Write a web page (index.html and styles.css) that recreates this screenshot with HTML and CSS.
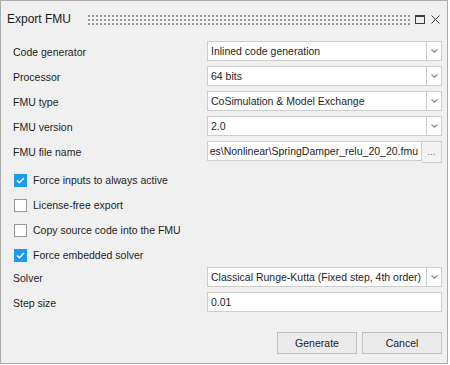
FILE: index.html
```html
<!doctype html>
<html lang="en">
    <head>
        <meta charset="UTF-8" />
        <meta name="viewport" content="width=device-width, initial-scale=1.0" />
        <title>Export FMU</title>
        <link rel="stylesheet" href="styles.css">
    </head>
    <body>
        <div class="window">
            <div class="titlebar">
                <span class="title">Export FMU</span>
                <div class="grip"></div>
                <svg class="tb-icon" width="10" height="9" viewBox="0 0 10 9">
                    <rect x="0.5" y="0.5" width="9" height="8" fill="none" stroke="#3c3c3c" />
                    <line x1="0" y1="1.5" x2="10" y2="1.5" stroke="#3c3c3c" />
                </svg>
                <svg class="tb-icon tb-close" width="9" height="9" viewBox="0 0 9 9">
                    <path d="M0.5 0.5 L8.5 8.5 M8.5 0.5 L0.5 8.5" stroke="#3c3c3c" fill="none" />
                </svg>
            </div>

            <div class="content">
                <div class="fields">
                    <div class="row">
                        <label>Code generator</label>
                        <div class="combo">
                            <span class="combo-value">Inlined code generation</span>
                            <span class="combo-btn"><svg width="7" height="4" viewBox="0 0 7 4"><path d="M0.5 0.5 L3.5 3.2 L6.5 0.5" fill="none" stroke="#8a8a8a" stroke-width="1.2" /></svg></span>
                        </div>
                    </div>
                    <div class="row">
                        <label>Processor</label>
                        <div class="combo">
                            <span class="combo-value">64 bits</span>
                            <span class="combo-btn"><svg width="7" height="4" viewBox="0 0 7 4"><path d="M0.5 0.5 L3.5 3.2 L6.5 0.5" fill="none" stroke="#8a8a8a" stroke-width="1.2" /></svg></span>
                        </div>
                    </div>
                    <div class="row">
                        <label>FMU type</label>
                        <div class="combo">
                            <span class="combo-value">CoSimulation &amp; Model Exchange</span>
                            <span class="combo-btn"><svg width="7" height="4" viewBox="0 0 7 4"><path d="M0.5 0.5 L3.5 3.2 L6.5 0.5" fill="none" stroke="#8a8a8a" stroke-width="1.2" /></svg></span>
                        </div>
                    </div>
                    <div class="row">
                        <label>FMU version</label>
                        <div class="combo">
                            <span class="combo-value">2.0</span>
                            <span class="combo-btn"><svg width="7" height="4" viewBox="0 0 7 4"><path d="M0.5 0.5 L3.5 3.2 L6.5 0.5" fill="none" stroke="#8a8a8a" stroke-width="1.2" /></svg></span>
                        </div>
                    </div>
                    <div class="row">
                        <label>FMU file name</label>
                        <div class="file">
                            <div class="file-path">
                                <span>es\Nonlinear\SpringDamper_relu_20_20.fmu</span>
                            </div>
                            <span class="browse">...</span>
                        </div>
                    </div>
                </div>

                <div class="checks">
                    <div class="check">
                        <span class="box checked"><svg width="9" height="7" viewBox="0 0 9 7"><path d="M1 3.6 L3.4 5.8 L8 1" fill="none" stroke="#fff" stroke-width="1.4" /></svg></span>
                        <span>Force inputs to always active</span>
                    </div>
                    <div class="check">
                        <span class="box"></span>
                        <span>License-free export</span>
                    </div>
                    <div class="check">
                        <span class="box"></span>
                        <span>Copy source code into the FMU</span>
                    </div>
                    <div class="check">
                        <span class="box checked"><svg width="9" height="7" viewBox="0 0 9 7"><path d="M1 3.6 L3.4 5.8 L8 1" fill="none" stroke="#fff" stroke-width="1.4" /></svg></span>
                        <span>Force embedded solver</span>
                    </div>
                </div>

                <div class="fields fields-solver">
                    <div class="row">
                        <label>Solver</label>
                        <div class="combo">
                            <span class="combo-value">Classical Runge-Kutta (Fixed step, 4th order)</span>
                            <span class="combo-btn"><svg width="7" height="4" viewBox="0 0 7 4"><path d="M0.5 0.5 L3.5 3.2 L6.5 0.5" fill="none" stroke="#8a8a8a" stroke-width="1.2" /></svg></span>
                        </div>
                    </div>
                    <div class="row">
                        <label>Step size</label>
                        <div class="textbox">0.01</div>
                    </div>
                </div>

                <div class="actions">
                    <button type="button">Generate</button>
                    <button type="button">Cancel</button>
                </div>
            </div>
        </div>
    </body>
</html>
```

FILE: styles.css
```css
body {
    margin: 0;
    background: #fff;
    font-family: "Liberation Sans", Arial, sans-serif;
    font-size: 10.5px;
    color: #1e1e1e;
}
.window {
    width: 448px;
    height: 364px;
    box-sizing: border-box;
    border: 1px solid #ababab;
    background: #f0f0f0;
}
.titlebar {
    display: flex;
    align-items: center;
    height: 36px;
    padding: 0 7px 0 6px;
}
.title {
    font-size: 12px;
    color: #1a1a1a;
}
.grip {
    flex: 1;
    height: 11px;
    margin: 0 5px 0 16px;
    background-image: radial-gradient(circle, #999 0.8px, transparent 1px);
    background-size: 4px 4px;
}
.tb-icon {
    display: block;
}
.tb-close {
    margin-left: 6px;
}
.content {
    padding: 4px 5px 0 12px;
}
.fields {
    display: flex;
    flex-direction: column;
    gap: 5px;
}
.fields-solver {
    margin-top: 2px;
}
.row {
    display: grid;
    grid-template-columns: 194px minmax(0, 1fr);
    height: 20px;
}
.row label {
    padding-top: 5px;
}
.combo {
    display: flex;
    min-width: 0;
}
.combo-value,
.textbox,
.file-path {
    flex: 1;
    min-width: 0;
    box-sizing: border-box;
    height: 20px;
    line-height: 18px;
    padding: 0 3px;
    border: 1px solid #cdcdcd;
    background: #fff;
    white-space: nowrap;
    overflow: hidden;
}
.combo-btn {
    width: 15px;
    box-sizing: border-box;
    border: 1px solid #cdcdcd;
    border-left: none;
    background: #fff;
    display: flex;
    align-items: center;
    justify-content: center;
}
.file {
    display: flex;
    min-width: 0;
}
.file-path {
    display: flex;
    justify-content: flex-end;
    padding-left: 0;
}
.file-path span {
    flex-shrink: 0;
}
.browse {
    width: 20px;
    flex-shrink: 0;
    box-sizing: border-box;
    border: 1px solid #cdcdcd;
    border-left: none;
    background: #f3f3f3;
    color: #777;
    text-align: center;
    line-height: 20px;
    font-size: 10px;
}
.checks {
    display: flex;
    flex-direction: column;
    gap: 5px;
    margin-top: 9px;
}
.check {
    display: flex;
    align-items: center;
    gap: 6px;
    height: 20px;
    padding-left: 1px;
}
.box {
    width: 13px;
    height: 13px;
    box-sizing: border-box;
    border: 1px solid #9a9a9a;
    background: #fff;
    display: flex;
    align-items: center;
    justify-content: center;
}
.box.checked {
    background: #1e9be8;
    border-color: #1e9be8;
}
.actions {
    display: flex;
    justify-content: flex-end;
    gap: 5px;
    margin-top: 20px;
}
.actions button {
    width: 80px;
    height: 22px;
    font-family: inherit;
    font-size: 10.5px;
    color: #1e1e1e;
    background: #ebebeb;
    border: 1px solid #c2c2c2;
    border-radius: 0;
    padding: 0;
}
```
